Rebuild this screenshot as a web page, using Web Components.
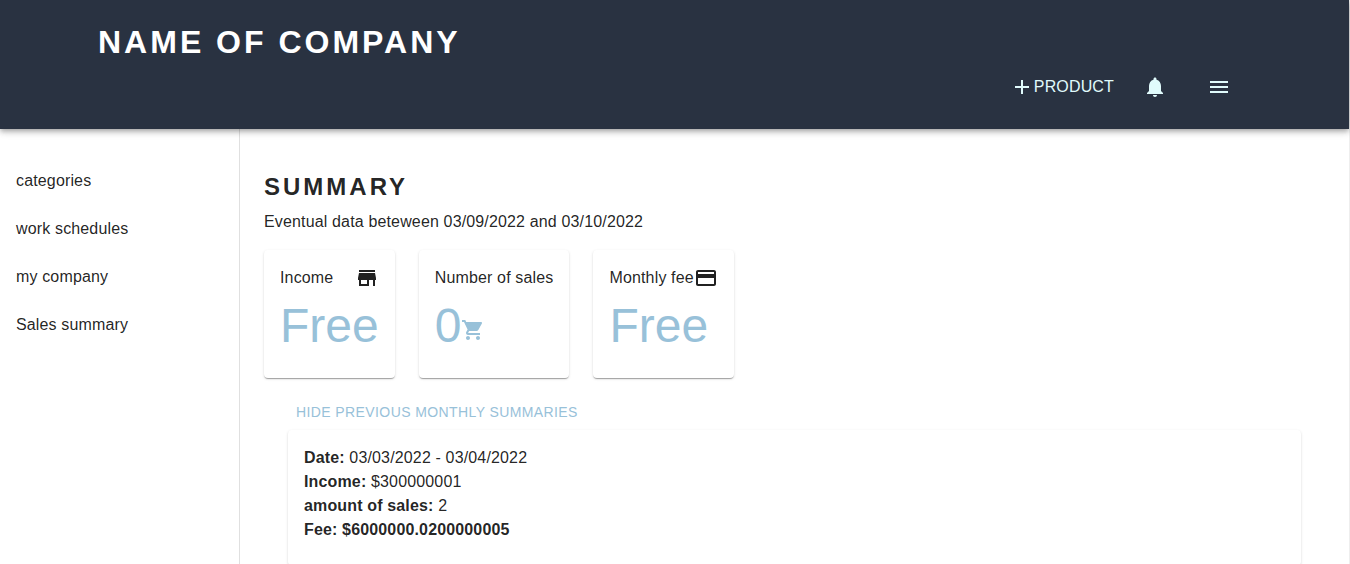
<!DOCTYPE html>
<html lang="en">
<head>
<meta charset="utf-8">
<meta name="viewport" content="width=device-width, initial-scale=1">
<title>Sales summary</title>
<style>
  :root {
    --navy: #293241;
    --ice: #e0fbfc;
    --sky: #98c1d9;
    --ink: rgba(0, 0, 0, 0.87);
    --line: #e0e0e0;
    --surface: #fff;
    --card-shadow: 0 2px 1px -1px rgba(0,0,0,.2), 0 1px 1px 0 rgba(0,0,0,.14), 0 1px 3px 0 rgba(0,0,0,.12);
  }
  html { scrollbar-width: none; }
  body {
    margin: 0;
    background: #fff;
    color: var(--ink);
    font: 400 16px/24px "Liberation Sans", Arial, sans-serif;
    letter-spacing: 0.00938em;
  }
</style>
</head>
<body>
<app-shell>
  <app-header slot="header" company="NAME OF COMPANY"></app-header>
  <side-nav slot="nav">
    <nav-item href="#categories">categories</nav-item>
    <nav-item href="#schedules">work schedules</nav-item>
    <nav-item href="#company">my company</nav-item>
    <nav-item href="#summary">Sales summary</nav-item>
  </side-nav>
  <summary-page>
    <stat-card label="Income" icon="store">Free</stat-card>
    <stat-card label="Number of sales">0<ui-icon name="cart"></ui-icon></stat-card>
    <stat-card label="Monthly fee" icon="card">Free</stat-card>
    <month-card slot="history" date="03/03/2022 - 03/04/2022" income="$300000001" sales="2" fee="$6000000.0200000005"></month-card>
  </summary-page>
</app-shell>

<script>
const define = (name, render) => customElements.define(name, class extends HTMLElement {
  constructor() {
    super();
    this.attachShadow({ mode: "open" });
  }
  connectedCallback() {
    this.shadowRoot.innerHTML = render(this);
  }
});

const ICONS = {
  add: "M19 13h-6v6h-2v-6H5v-2h6V5h2v6h6v2z",
  bell: "M12 22c1.1 0 2-.9 2-2h-4c0 1.1.89 2 2 2zm6-6v-5c0-3.07-1.64-5.64-4.5-6.32V4c0-.83-.67-1.5-1.5-1.5s-1.5.67-1.5 1.5v.68C7.63 5.36 6 7.92 6 11v5l-2 2v1h16v-1l-2-2z",
  menu: "M3 18h18v-2H3v2zm0-5h18v-2H3v2zm0-7v2h18V6H3z",
  store: "M20 4H4v2h16V4zm1 10v-2l-1-5H4l-1 5v2h1v6h10v-6h4v6h2v-6h1zm-9 4H6v-4h6v4z",
  card: "M20 4H4c-1.11 0-1.99.89-1.99 2L2 18c0 1.11.89 2 2 2h16c1.11 0 2-.89 2-2V6c0-1.11-.89-2-2-2zm0 14H4v-6h16v6zm0-10H4V6h16v2z",
  cart: "M7 18c-1.1 0-1.99.9-1.99 2S5.9 22 7 22s2-.9 2-2-.9-2-2-2zM1 2v2h2l3.6 7.59-1.35 2.45c-.16.28-.25.61-.25.96 0 1.1.9 2 2 2h12v-2H7.42c-.14 0-.25-.11-.25-.25l.03-.12.9-1.63h7.45c.75 0 1.41-.41 1.75-1.03l3.58-6.49c.08-.14.12-.31.12-.48 0-.55-.45-1-1-1H5.21l-.94-2H1zm16 16c-1.1 0-1.99.9-1.99 2s.89 2 1.99 2 2-.9 2-2-.9-2-2-2z"
};

define("ui-icon", el => `
  <style>
    :host { display: inline-block; width: 24px; height: 24px; flex: none; line-height: 0; }
    svg { display: block; width: 24px; height: 24px; fill: currentColor; }
  </style>
  <svg viewBox="0 0 24 24" aria-hidden="true"><path d="${ICONS[el.getAttribute("name")]}"/></svg>`);

define("app-shell", () => `
  <style>
    :host { display: flex; flex-direction: column; min-height: 100vh; border-right: 1px solid #eee; box-sizing: border-box; }
    .body { display: flex; flex: 1; }
    main { flex: 1; min-width: 0; }
  </style>
  <slot name="header"></slot>
  <div class="body"><slot name="nav"></slot><main><slot></slot></main></div>`);

define("app-header", el => `
  <style>
    :host {
      display: block; position: relative; padding: 22px 110px 22px 98px;
      background: var(--navy); color: var(--ice);
      box-shadow: 0 2px 4px -1px rgba(0,0,0,.2), 0 4px 5px 0 rgba(0,0,0,.14), 0 1px 10px 0 rgba(0,0,0,.12);
    }
    h1 { margin: 0 0 5px; font-size: 32px; line-height: 40px; letter-spacing: 3px; color: #fff; }
    .actions { display: flex; justify-content: flex-end; align-items: center; gap: 24px; }
    button { display: flex; align-items: center; border: 0; padding: 8px; background: none; color: inherit; font: inherit; letter-spacing: inherit; cursor: pointer; }
    .product { padding: 8px 0; margin-right: -3px; }
  </style>
  <h1>${el.getAttribute("company")}</h1>
  <div class="actions">
    <button class="product" type="button"><ui-icon name="add"></ui-icon>PRODUCT</button>
    <button type="button" aria-label="Notifications"><ui-icon name="bell"></ui-icon></button>
    <button type="button" aria-label="Menu"><ui-icon name="menu"></ui-icon></button>
  </div>`);

define("side-nav", () => `
  <style>
    :host { display: block; flex: none; width: 240px; box-sizing: border-box; padding-top: 28px; border-right: 1px solid var(--line); }
    nav { display: flex; flex-direction: column; }
  </style>
  <nav><slot></slot></nav>`);

define("nav-item", el => `
  <style>
    :host { display: block; }
    a { display: block; padding: 12px 16px; color: inherit; text-decoration: none; }
  </style>
  <a href="${el.getAttribute("href")}"><slot></slot></a>`);

define("summary-page", () => `
  <style>
    :host { display: block; padding: 42px 24px 24px; }
    h2 { margin: 0; font-size: 24px; line-height: 32px; letter-spacing: 3px; }
    p { margin: 7px 0 16px; }
    .stats { display: flex; flex-wrap: wrap; gap: 24px; margin-bottom: 16px; }
    .history { padding: 0 24px; }
    button {
      display: block; border: 0; padding: 6px 8px; background: none; color: var(--sky);
      font: 14px/24px "Liberation Sans", Arial, sans-serif; letter-spacing: 0.02857em; cursor: pointer;
    }
  </style>
  <h2>SUMMARY</h2>
  <p>Eventual data beteween 03/09/2022 and 03/10/2022</p>
  <section class="stats"><slot></slot></section>
  <section class="history">
    <button type="button" aria-expanded="true">HIDE PREVIOUS MONTHLY SUMMARIES</button>
    <slot name="history"></slot>
  </section>`);

define("stat-card", el => `
  <style>
    :host { display: block; padding: 16px 16px 24px; border-radius: 4px; background: var(--surface); box-shadow: var(--card-shadow); }
    .label { display: flex; justify-content: space-between; }
    .value { margin-top: 8px; font-size: 48px; line-height: 56px; letter-spacing: 0; color: var(--sky); }
  </style>
  <div class="label"><span>${el.getAttribute("label")}</span>${el.hasAttribute("icon") ? `<ui-icon name="${el.getAttribute("icon")}"></ui-icon>` : ""}</div>
  <div class="value"><slot></slot></div>`);

define("month-card", el => `
  <style>
    :host { display: block; padding: 16px 16px 24px; border-radius: 4px; background: var(--surface); box-shadow: var(--card-shadow); }
  </style>
  <div><b>Date:</b> ${el.getAttribute("date")}</div>
  <div><b>Income:</b> ${el.getAttribute("income")}</div>
  <div><b>amount of sales:</b> ${el.getAttribute("sales")}</div>
  <div><b>Fee: ${el.getAttribute("fee")}</b></div>`);
</script>
</body>
</html>
